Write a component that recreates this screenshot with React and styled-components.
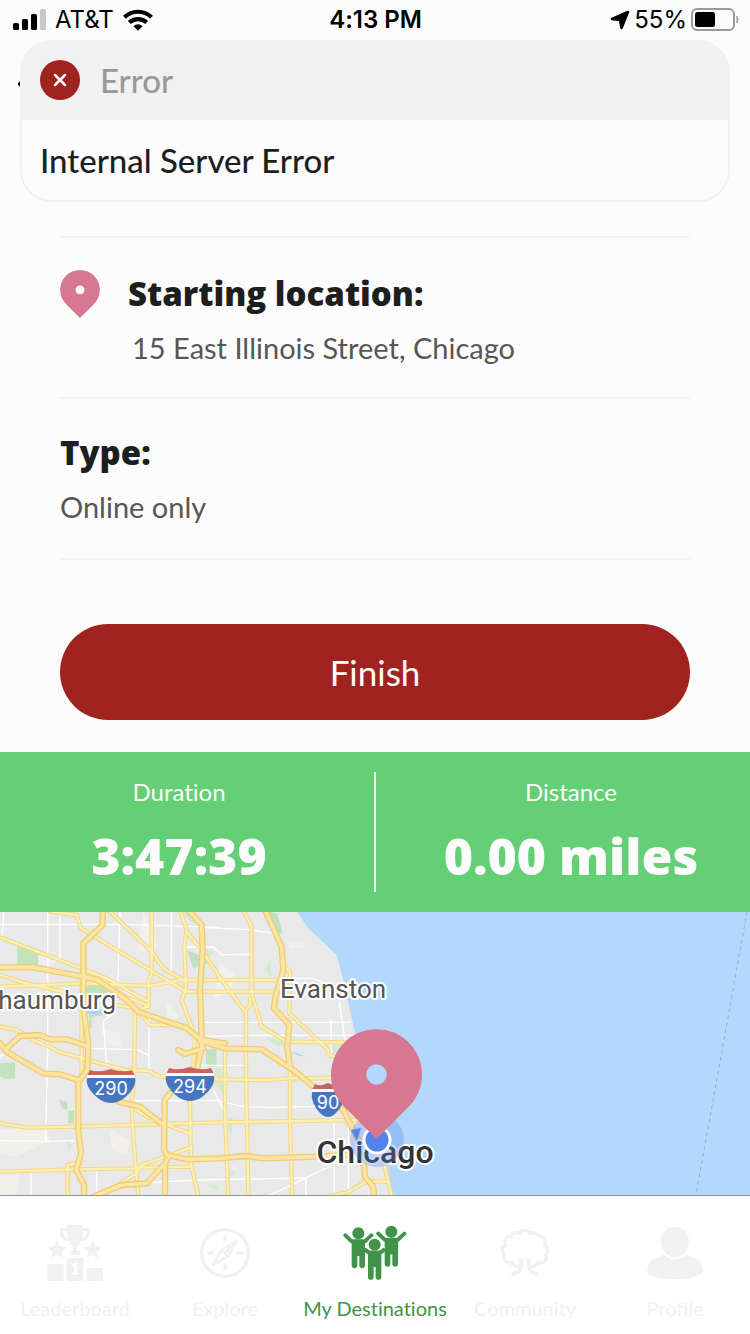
import React from "react";
import styled, { createGlobalStyle, css } from "styled-components";

const GlobalStyle = createGlobalStyle`
  *, *::before, *::after { box-sizing: border-box; }
  body { margin: 0; background: #fcfcfc; }
  h2, p, dl, dt, dd { margin: 0; }
  button { border: 0; padding: 0; background: none; font: inherit; color: inherit; cursor: pointer; }
`;

const Page = styled.div`
  display: flex;
  flex-direction: column;
  min-height: 100vh;
  position: relative;
  background: #fcfcfc;
  color: #1c1f1e;
  font-family: Lato, "Open Sans", sans-serif;
  font-variant-ligatures: none;
`;

const StatusBar = styled.div`
  display: grid;
  grid-template-columns: 1fr auto 1fr;
  align-items: center;
  height: 40px;
  padding: 0 11px 0 12px;
  color: #000;
  font-family: Inter, "Liberation Sans", sans-serif;
  font-size: 24px;
  line-height: 40px;
`;

const StatusGroup = styled.div`
  display: flex;
  align-items: center;
  gap: ${(p) => p.$gap}px;
  justify-content: ${(p) => (p.$end ? "flex-end" : "flex-start")};
`;

const Clock = styled.time`
  font-weight: 600;
`;

const Header = styled.header`
  height: 196px;
  padding: 24px 16px;
`;

const BackButton = styled.button`
  display: flex;
  width: 40px;
  height: 40px;
  align-items: center;
`;

const Toast = styled.section`
  position: absolute;
  z-index: 2;
  top: 40px;
  left: 20px;
  right: 20px;
  border: 2px solid #f1f1f1;
  border-radius: 32px;
  overflow: hidden;
  background: #fcfcfc;
`;

const ToastHead = styled.div`
  display: flex;
  align-items: center;
  gap: 20px;
  height: 78px;
  padding: 0 18px 2px;
  background: #f1f1f1;
  color: #98979d;
  font-size: 33px;
  font-weight: 500;
`;

const ToastBadge = styled.span`
  display: flex;
  width: 40px;
  height: 40px;
  border-radius: 50%;
  background: #a0231f;
`;

const ToastText = styled.p`
  padding: 0 18px;
  font-size: 33px;
  font-weight: 500;
  line-height: 80px;
`;

const Details = styled.main`
  padding: 0 60px;
`;

const Section = styled.section`
  display: flex;
  gap: 28px;
  height: 161px;
  padding-top: ${(p) => p.$top}px;
  border-top: 2px solid #f4f4f6;
`;

const SectionTitle = styled.h2`
  font-family: "Open Sans", Lato, sans-serif;
  font-size: 33px;
  font-weight: 800;
  line-height: 48px;
`;

const SectionText = styled.p`
  margin-top: 6px;
  padding-left: ${(p) => (p.$indent ? 4 : 0)}px;
  color: #595655;
  font-size: 29px;
  line-height: 48px;
`;

const Actions = styled.div`
  padding: 64px 0 32px;
  border-top: 2px solid #f4f4f6;
`;

const FinishButton = styled.button`
  display: block;
  width: 100%;
  height: 96px;
  border-radius: 48px;
  background: #a0231f;
  color: #fcfcfc;
  font-size: 35px;
`;

const Stats = styled.dl`
  display: flex;
  height: 160px;
  padding: 20px 0;
  background: #64cf75;
  color: #fcfcfc;
`;

const Stat = styled.div`
  flex: 1;
  text-align: center;
  padding-right: ${(p) => (p.$first ? 16 : 0)}px;
  padding-left: ${(p) => (p.$first ? 0 : 16)}px;
  border-right: ${(p) => (p.$first ? "2px solid #fcfcfc" : "0")};
`;

const StatLabel = styled.dt`
  font-size: 24px;
  line-height: 40px;
`;

const StatValue = styled.dd`
  font-family: "Open Sans", Lato, sans-serif;
  font-size: 50px;
  font-weight: 800;
  line-height: 88px;
`;

const MapArea = styled.div`
  flex: 1;
  min-height: 283px;
  position: relative;
  overflow: hidden;
  background: #b3d8fc;
`;

const MapCanvas = styled.svg`
  position: absolute;
  inset: 0;
  width: 100%;
  height: 100%;
`;

const TabBar = styled.nav`
  display: flex;
  height: 139px;
  border-top: 1px solid #8f949a;
  background: #fff;
`;

const Tab = styled.a`
  display: flex;
  flex: 1 1 0;
  min-width: 0;
  flex-direction: column;
  align-items: center;
  gap: 13px;
  padding-top: 29px;
  color: #f1f1f1;
  font-size: 20px;
  line-height: 28px;
  text-decoration: none;
  white-space: nowrap;
  ${(p) => p.$active && css`color: #41934a;`}
`;

const PinShape = ({ hole }) => (
  <>
    <path d="M60 145 17.500 102.500A60 60 0 1 1 102.500 102.500Z" fill="#d67892" />
    <circle cx="60" cy="60" r="13.500" fill={hole} />
  </>
);

const SignalIcon = () => (
  <svg width="34" height="22" viewBox="0 0 34 22" aria-hidden="true">
    <rect x="1" y="14" width="6" height="7" rx="1.500" />
    <rect x="10" y="10" width="6" height="11" rx="1.500" />
    <rect x="19" y="5" width="6" height="16" rx="1.500" />
    <rect x="28" y="0" width="6" height="21" rx="1.500" fill="#c8c8c8" />
  </svg>
);

const WifiIcon = () => (
  <svg width="30" height="22" viewBox="0 0 30 22" fill="none" stroke="#000" strokeWidth="4.200" aria-hidden="true">
    <path d="M1.500 8.300A19.200 19.200 0 0 1 28.500 8.300" />
    <path d="M6.300 13.600A12.500 12.500 0 0 1 23.700 13.600" />
    <path d="M15 21.700 10.400 17.200A6.700 6.700 0 0 1 19.600 17.200Z" fill="#000" stroke="none" />
  </svg>
);

const LocationIcon = () => (
  <svg width="20" height="20" viewBox="0 0 20 20" aria-hidden="true">
    <path d="M18 2 11.500 18 10 10 2 9Z" stroke="#000" strokeWidth="2.500" strokeLinejoin="round" />
  </svg>
);

const BatteryIcon = () => (
  <svg width="48" height="24" viewBox="0 0 48 24" aria-hidden="true">
    <rect x="1" y="1" width="42" height="21" rx="5" fill="none" stroke="#9a9a9a" strokeWidth="2" />
    <rect x="4" y="4" width="20" height="15" rx="2.500" />
    <path d="M46 8q2 3.500 0 7Z" fill="#9a9a9a" stroke="#9a9a9a" />
  </svg>
);

const LeaderboardIcon = () => (
  <svg width="56" height="56" viewBox="141 105 168 168" fill="currentColor" aria-hidden="true">
    <path d="M141 223h50v50h-50zM200 204h50v69h-50zM260 234h49v39h-49z" />
    <path d="M201 105h48v9h21v12q0 24-25 28-6 9-13 13-3 8-1 16h9v12h-30v-12h9q2-8-1-16-8-5-13-13-25-4-25-28v-12h21zM201 123h-11q-1 17 14 22-3-10-3-22zM249 123q0 12-3 22 15-5 14-22z" fillRule="evenodd" />
    <path d="m171 150 8 19 21 2-16 14 5 20-18-11-18 11 5-20-16-14 21-2zM278 150l8 19 21 2-16 14 5 20-18-11-18 11 5-20-16-14 21-2z" />
    <text x="225" y="252" fill="#fff" textAnchor="middle" fontFamily="DejaVu Serif, serif" fontWeight="700" fontSize="42" stroke="#fff" strokeWidth="2">1</text>
  </svg>
);

const ExploreIcon = () => (
  <svg width="56" height="56" viewBox="591 105 168 168" fill="none" stroke="currentColor" aria-hidden="true">
    <circle cx="675" cy="189" r="70" strokeWidth="10" />
    <path d="M675 141v9M675 227v9M627 189h10M713 189h10" strokeWidth="11" strokeLinecap="round" />
    <path d="M710 153 684 199 640 224 665 178Z" strokeWidth="8" strokeLinejoin="round" />
    <path d="M665 178 684 199M675 189 708 155" strokeWidth="7" />
  </svg>
);

const Person = ({ x, y }) => (
  <g transform={`translate(${x} ${y})`}>
    <circle cx="0" cy="0" r="18" />
    <path d="M-39 6-20 24H20L39 6" fill="none" stroke="currentColor" strokeWidth="12" strokeLinecap="round" strokeLinejoin="round" />
    <path d="M-20 20H20V96a8 8 0 0 1-17 0V68H-3V96a8 8 0 0 1-17 0Z" />
  </g>
);

const DestinationsIcon = () => (
  <svg width="64" height="56" viewBox="158 105 192 168" fill="currentColor" aria-hidden="true">
    <Person x={204} y={130} />
    <Person x={303} y={125} />
    <circle cx="253" cy="164" r="22" fill="#fff" />
    <path d="M224 172 237 184H269L282 172" fill="none" stroke="#fff" strokeWidth="5" />
    <circle cx="253" cy="164" r="18" />
    <path d="M222 177 236 188H270L284 177" fill="none" stroke="currentColor" strokeWidth="12" />
    <path d="M229 194H277V232H229Z" fill="#fff" />
    <path d="M233 182H273V261a8 8 0 0 1-17 0V231H250V261a8 8 0 0 1-17 0Z" />
  </svg>
);

const CommunityIcon = () => (
  <svg width="56" height="56" viewBox="138 105 168 168" fill="none" stroke="currentColor" strokeWidth="10" strokeLinejoin="round" aria-hidden="true">
    <path d="M210 207V234Q208 246 181 254M234 207V234Q236 246 263 254" strokeWidth="12" />
    <path d="M210 226A17 17 0 0 1 183 217A17 17 0 0 1 160 194A16 16 0 0 1 164 166A17 17 0 0 1 180 139A17 17 0 0 1 205 131A20 20 0 0 1 239 131A17 17 0 0 1 264 139A17 17 0 0 1 280 166A16 16 0 0 1 284 194A17 17 0 0 1 261 217A17 17 0 0 1 234 226" />
  </svg>
);

const ProfileIcon = () => (
  <svg width="56" height="56" viewBox="588 105 168 168" fill="currentColor" aria-hidden="true">
    <path d="M672 110c25 0 42 18 42 43 0 26-19 49-42 49s-42-23-42-49c0-25 17-43 42-43Z" />
    <path d="M639 195q33 28 66 0 33 7 45 25 6 10 6 22-6 25-84 25t-84-25q0-12 6-22 12-18 45-25Z" />
  </svg>
);

/* Road geometry is kept on a grid three times finer than the map view. */
const localRoads = [
  "M0 43H365L660 52M12 0 5 90M143 0V420L137 692M180 0V145M360 0 354 215M515 0 513 185M0 692 137 694 222 692",
  "M345 308 310 333 320 460M265 415 410 419 447 437M447 310V480M555 111H642L665 135 755 132M93 785V860M290 780V860M400 572H650L730 590 820 592 1010 588",
  "M600 52 735 58 812 68M755 205H940L1018 240M616 337H1050M620 380 750 376H1060M600 466H735M640 540 675 608M993 330V440M1018 275 1035 390",
  "M435 818 600 810 915 804 1000 765M800 860 918 804V860M1002 620V850M1045 640V850M0 440 20 425",
];

const arterials = [
  "M0 82 200 158 320 205 445 275", "M150 5 230 15 243 55 450 180 560 245", "M325 0 455 125 490 175 560 215",
  "M0 230 250 220 450 228 540 210H835", "M0 195 60 215 205 250", "M455 0V190L446 215V290L410 300",
  "M540 0 560 60 553 110 558 235 545 270 585 380 580 470", "M560 65 605 120 665 210 735 305",
  "M560 245H820", "M310 210 375 260 440 285M350 285 405 295 450 345H545L570 350", "M405 300 403 480 395 590 403 720 415 860",
  "M0 350 50 360 110 395 160 415 175 425 250 445 300 460 380 480 450 483 465 495 500 503H650",
  "M0 640 80 653 230 650 395 645 660 637 1070 630", "M0 785 230 778 400 775 410 773 575 770 595 860",
  "M203 860V765L245 757M295 860 410 790 425 765 575 712", "M570 570 573 770M385 585 450 625M500 645 570 670",
  "M730 0 755 50V250L785 350 860 395M750 265V285L738 300V480L745 860", "M675 425V610L685 860",
  "M855 170 870 185 868 310 985 420V435L1005 440", "M860 395 1035 397M640 508 800 510 870 505 1000 504",
  "M870 470V640L877 860", "M1150 750 1175 860M1090 815H1160M980 860 1040 848 1098 815", "M245 205V510",
];

const highways = [
  "M308 0V45L250 100V290L265 400 262 480 235 515V660L243 730 228 780 252 825V860",
  "M0 172H100L250 200 290 208 380 270 415 305 560 355 610 395 675 415 785 418 880 480 940 530 1030 600 1050 640 1090 720 1095 800 1120 830 1122 860",
  "M565 0 605 45 608 120 600 240 606 410 590 480", "M510 550 494 570 492 720 505 740 495 760V860",
  "M20 415 60 378 120 375 150 388 200 388 260 408", "M0 400 20 425 130 490 180 493 240 512",
  "M355 575 420 590 490 645", "M500 735 560 748 660 745 735 738 790 745 950 740 1040 735",
  "M495 760 440 820 365 825 280 860", "M535 420 555 432 610 415 600 388 675 400",
  "M795 0 845 110 850 180 825 265 822 295 868 345 862 410 870 470",
];

const Roads = ({ paths, width, color }) => (
  <g fill="none" stroke={color} strokeWidth={width} strokeLinejoin="round" strokeLinecap="round">
    {paths.map((d) => <path key={d} d={d} />)}
  </g>
);

const Shield = ({ x, y, width, label }) => {
  const h = width / 2;
  return (
    <g transform={`translate(${x} ${y})`}>
      <path d={`M${-h + 3} 0Q${-h / 2} 3 0 -1 ${h / 2} 3 ${h - 3} 0L${h} 6H${-h}Z`} fill="#c8645f" />
      <path d={`M${-h} 5H${h}V9H${-h}Z`} fill="#fff" />
      <path d={`M${-h} 8H${h}Q${h + 2} 18 ${h / 2} 29 0 37 ${-h / 2} 29 ${-h - 2} 18 ${-h} 8Z`} fill="#4676c2" />
      <text y="25" textAnchor="middle" fill="#fff" fontSize="18">{label}</text>
    </g>
  );
};

const CityMap = () => (
  <MapCanvas viewBox="0 0 750 283" preserveAspectRatio="xMinYMin slice" role="img" aria-label="Map of Chicago">
    <g transform="translate(0 -2) scale(0.33333)">
      <path d="M0 0H888L925 55 1010 135 1030 210 1065 370 1140 560 1165 690 1160 760 1180 860H0Z" fill="#e9e9e9" />
      <path d="M110 130 170 150 160 165 95 160ZM0 660 130 655 150 690 50 740 0 730ZM330 660 390 690 380 735 335 720ZM430 5 470 110 410 130ZM300 350 360 370 365 410 320 400ZM860 95 915 93V112L870 115ZM660 160 705 190 690 245 640 270ZM0 800 60 790 55 850 0 860ZM500 280 540 320 500 340Z" fill="#f1f0eb" />
      <path d="M52 105 115 130V165H52ZM258 225H335L320 250H258ZM268 325V355H275V320L320 315 310 300 265 305ZM0 460 45 457V505L15 508 0 498ZM178 570 202 575V600L185 595ZM205 600 222 603V640H205ZM560 120 610 140 635 120 625 160 580 175ZM618 418H650V470H618ZM808 5 830 10 848 68 830 70Z" fill="#c0e2bd" />
      <path d="M545 0 590 20 580 45ZM645 475H668V552L640 520ZM795 378 850 395 855 415 820 402ZM812 145V200L795 180ZM998 405 1035 400V425L998 430ZM685 620 700 625 695 680 685 665ZM690 775 708 790 690 802ZM200 695 220 705 205 720ZM620 825 650 822 655 842ZM618 115 640 130 620 150Z" fill="#d3ead0" />
      <path d="M262 303 315 298 290 312 262 310ZM877 425 918 440 890 435Z" fill="#a9d2fb" />
      <Roads paths={localRoads} width="4" color="#fff" />
      <Roads paths={arterials} width="13" color="#f0d88c" />
      <Roads paths={arterials} width="7" color="#fdefb0" />
      <Roads paths={highways} width="19" color="#edcc75" />
      <Roads paths={highways} width="11" color="#fbe5a0" />
    </g>
    <path d="M747 0 696 283" stroke="#93b2d0" strokeDasharray="4 3" fill="none" />
    <g fontFamily="Inter, Liberation Sans, sans-serif">
      <Shield x={111} y={158} width={48} label="290" />
      <Shield x={190} y={156} width={48} label="294" />
      <Shield x={328} y={172} width={32} label="90" />
    </g>
    <g fontFamily="Roboto, Liberation Sans, sans-serif" stroke="#fff" strokeWidth="4" strokeLinejoin="round" paintOrder="stroke" fill="#555">
      <text x="116" y="97" textAnchor="end" fontSize="26">Schaumburg</text>
      <text x="333" y="86" textAnchor="middle" fontSize="26">Evanston</text>
      <text x="375" y="251" textAnchor="middle" fontSize="32" fontWeight="500" fill="#333">Chicago</text>
    </g>
    <circle cx="377" cy="228" r="27" fill="#5384ed" opacity="0.300" />
    <path d="M351 218 361 216 357 229Z" fill="#5384ed" />
    <circle cx="377" cy="228" r="13" fill="#5384ed" stroke="#fff" strokeWidth="3" />
    <svg x="331" y="117" width="91" height="110" viewBox="0 0 120 145">
      <PinShape hole="#b3d8fc" />
    </svg>
  </MapCanvas>
);

const tabs = [
  { label: "Leaderboard", Icon: LeaderboardIcon },
  { label: "Explore", Icon: ExploreIcon },
  { label: "My Destinations", Icon: DestinationsIcon, active: true },
  { label: "Community", Icon: CommunityIcon },
  { label: "Profile", Icon: ProfileIcon },
];

export default function App() {
  return (
    <>
      <GlobalStyle />
      <Page>
        <StatusBar>
          <StatusGroup $gap={9}>
            <SignalIcon />
            <span>AT&amp;T</span>
            <WifiIcon />
          </StatusGroup>
          <Clock>4:13 PM</Clock>
          <StatusGroup $gap={4} $end>
            <LocationIcon />
            <span>55%</span>
            <BatteryIcon />
          </StatusGroup>
        </StatusBar>

        <Header>
          <BackButton aria-label="Back">
            <svg width="20" height="36" viewBox="0 0 20 36" fill="none" stroke="#000" strokeWidth="4" strokeLinecap="round" strokeLinejoin="round" aria-hidden="true">
              <path d="M18 4 4 18 18 32" />
            </svg>
          </BackButton>
        </Header>

        <Toast role="alert">
          <ToastHead>
            <ToastBadge>
              <svg width="40" height="40" viewBox="0 0 40 40" stroke="#fff" strokeWidth="2.500" strokeLinecap="round" aria-hidden="true">
                <path d="M15 15 25 25M25 15 15 25" />
              </svg>
            </ToastBadge>
            Error
          </ToastHead>
          <ToastText>Internal Server Error</ToastText>
        </Toast>

        <Details>
          <Section $top={32}>
            <svg width="40" height="48" viewBox="0 0 120 145" aria-hidden="true">
              <PinShape hole="#fcfcfc" />
            </svg>
            <div>
              <SectionTitle>Starting location:</SectionTitle>
              <SectionText $indent>15 East Illinois Street, Chicago</SectionText>
            </div>
          </Section>
          <Section $top={30}>
            <div>
              <SectionTitle>Type:</SectionTitle>
              <SectionText>Online only</SectionText>
            </div>
          </Section>
          <Actions>
            <FinishButton>Finish</FinishButton>
          </Actions>
        </Details>

        <Stats>
          <Stat $first>
            <StatLabel>Duration</StatLabel>
            <StatValue>3:47:39</StatValue>
          </Stat>
          <Stat>
            <StatLabel>Distance</StatLabel>
            <StatValue>0.00 miles</StatValue>
          </Stat>
        </Stats>

        <MapArea>
          <CityMap />
        </MapArea>

        <TabBar>
          {tabs.map(({ label, Icon, active }) => (
            <Tab key={label} href="#" $active={active} aria-current={active ? "page" : undefined}>
              <Icon />
              {label}
            </Tab>
          ))}
        </TabBar>
      </Page>
    </>
  );
}
